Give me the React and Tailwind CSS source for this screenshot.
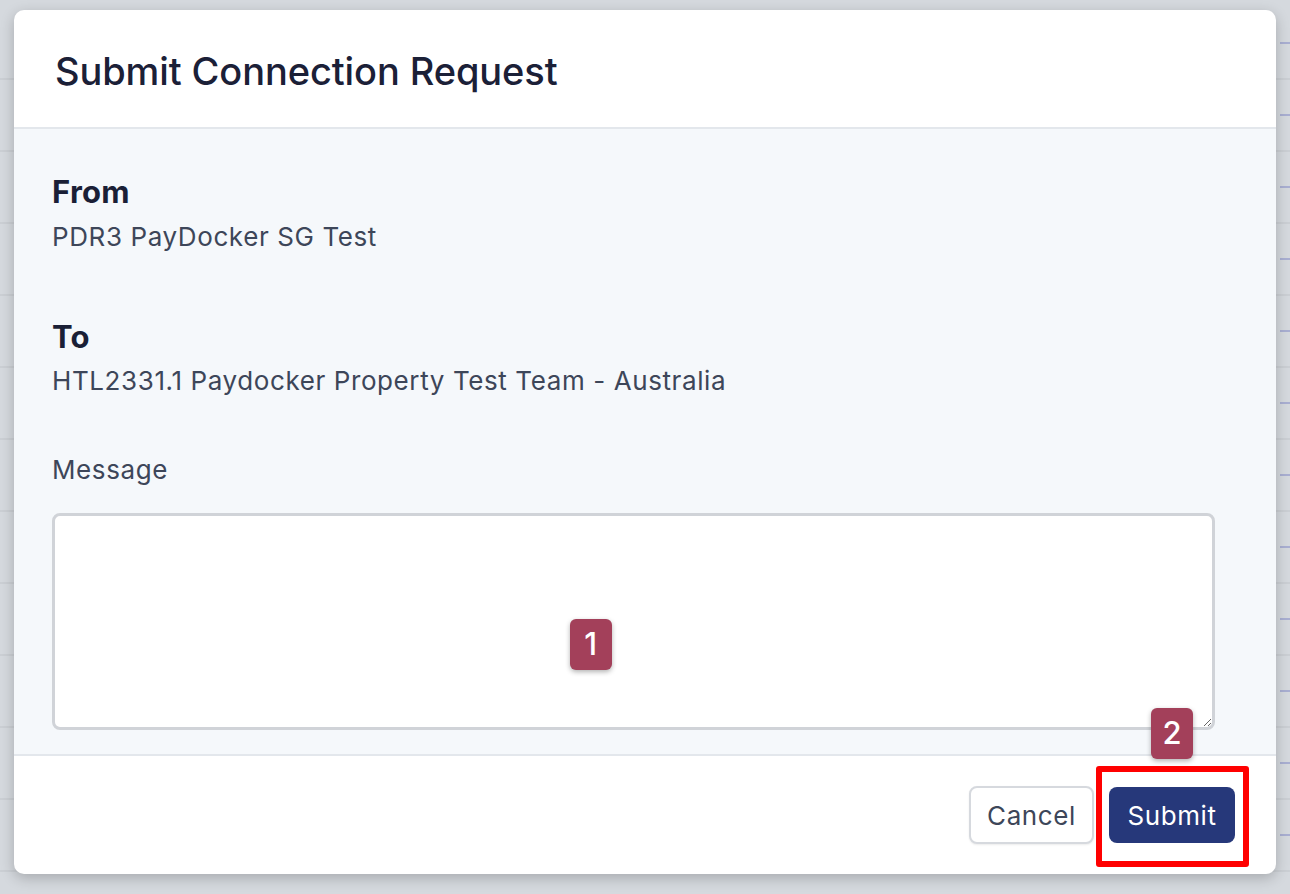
import React from 'react';

const rows = Array.from({ length: 13 });

const Badge = ({ n, className }) => (
  <div
    className={`absolute flex h-[51px] w-[42px] items-center justify-center rounded-[6px] bg-[#a3405a] text-[31px] font-medium text-white shadow-[0_2px_5px_rgba(0,0,0,0.3)] ${className}`}
  >
    {n}
  </div>
);

const App = () => {
  return (
    <div className="relative h-[894px] w-full overflow-hidden bg-[#d5d9de] font-['Inter',sans-serif]">
      {/* page behind the modal */}
      <div className="absolute inset-0 flex flex-col pt-[8px]">
        {rows.map((_, i) => (
          <div key={i} className="flex h-[72px] shrink-0 items-center justify-end border-b-2 border-[#cbcfd4]">
            <div className="h-[2px] w-[10px] bg-[#a9afd2]"></div>
          </div>
        ))}
      </div>

      {/* modal */}
      <div className="relative ml-[14px] mt-[10px] w-[1262px] rounded-[10px] bg-white shadow-[0_4px_14px_rgba(0,0,0,0.22)]">
        <div className="flex h-[119px] items-center rounded-t-[10px] border-b-2 border-[#e3e7ec] px-[41px] pt-[6px]">
          <h1 className="text-[38px] font-medium tracking-[-0.1px] text-[#1b2037]">
            Submit Connection Request
          </h1>
        </div>

        <div className="bg-[#f5f8fb] pb-[24px] pl-[38px] pt-[43px] tracking-[0.6px]">
          <div className="text-[31px] font-bold leading-[40px] tracking-[0.3px] text-[#1a1f36]">From</div>
          <div className="mt-[7px] text-[26px] leading-[36px] text-[#3d4659]">PDR3 PayDocker SG Test</div>

          <div className="mt-[62px] text-[31px] font-bold leading-[40px] tracking-[0.3px] text-[#1a1f36]">To</div>
          <div className="mt-[6px] text-[26px] leading-[36px] text-[#3d4659]">
            HTL2331.1 Paydocker Property Test Team - Australia
          </div>

          <div className="mt-[53px] text-[26px] leading-[36px] text-[#3d4659]">Message</div>

          <div className="relative mt-[25px] w-[1163px]">
            <textarea className="block h-[217px] w-full rounded-[8px] border-[3px] border-[#d0d3d8] bg-white outline-none"></textarea>
            <Badge n="1" className="left-[518px] top-[106px]" />
          </div>
        </div>

        <div className="flex h-[120px] items-center justify-end gap-[15px] rounded-b-[10px] border-t-2 border-[#e3e7ec] pr-[41px] tracking-[0.6px]">
          <button className="h-[58px] w-[125px] rounded-[8px] border-2 border-[#d6d9de] bg-white text-[26px] text-[#3d4659] shadow-[0_1px_2px_rgba(0,0,0,0.08)]">
            Cancel
          </button>
          <div className="relative">
            <div className="absolute -bottom-[24px] -left-[13px] -right-[14px] -top-[21px] rounded-[3px] border-[6px] border-[#ff0000]"></div>
            <button className="relative h-[56px] w-[126px] rounded-[8px] bg-[#26387a] text-[26px] text-white">
              Submit
            </button>
          </div>
        </div>

        <Badge n="2" className="left-[1137px] top-[698px]" />
      </div>
    </div>
  );
};

export default App;
